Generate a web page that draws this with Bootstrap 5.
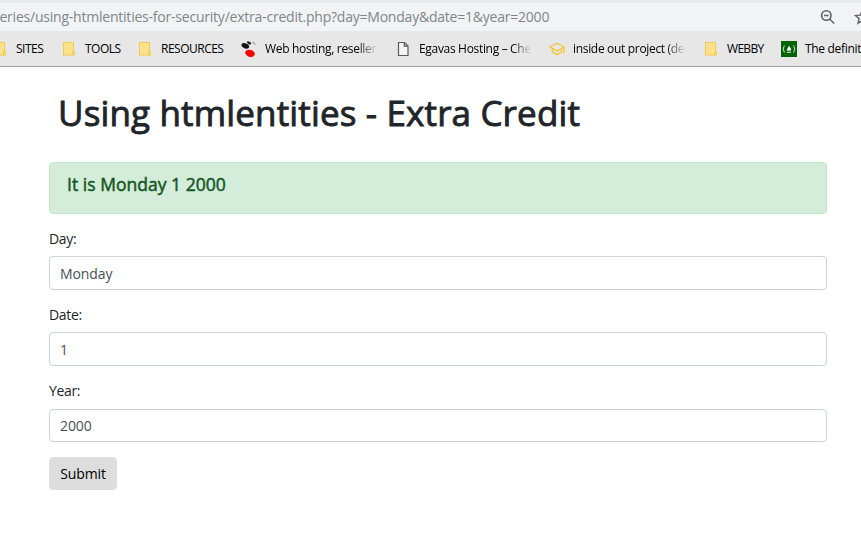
<!DOCTYPE html>
<html lang="en">
<head>
<meta charset="utf-8">
<title>Using htmlentities - Extra Credit</title>
<link href="https://cdn.jsdelivr.net/npm/bootstrap@5.3.0/dist/css/bootstrap.min.css" rel="stylesheet">
<style>
body { font-family: "Open Sans", "Noto Sans", sans-serif; font-size: 14px; line-height: 21px; color: #212529; height: 558px; }
.browser-top { height: 3px; background: #e8eaed; }
.address { height: 28px; background: #f1f3f4; color: #80868b; font-size: 14px; }
.address-url { letter-spacing: -.22px; white-space: nowrap; margin: -1px 0 0 -7px; }
.address-tools { width: 41px; gap: 18px; }
.bookmarks { height: 36px; background: #e7e7e7; border-bottom: 1px solid #a0a0a0; }
.bookmark { gap: 8px; font-size: 12px; color: #000; white-space: nowrap; }
.bookmark svg { width: 16px; height: 16px; flex: none; }
.bookmark:first-child { margin-left: -8px; }
.w-sites { width: 69px; } .w-tools { width: 76px; } .w-resources { width: 104px; }
.w-page { width: 154px; } .w-webby { width: 78px; } .w-last { width: 110px; }
.fade-title { width: 113px; -webkit-mask-image: linear-gradient(90deg, #000 82%, transparent); mask-image: linear-gradient(90deg, #000 82%, transparent); }
.t-caps { letter-spacing: -.5px; }
.t-webby { letter-spacing: -.7px; }
.t-title { letter-spacing: -.32px; }
.page { margin: 0 34px 0 49px; padding-top: 24px; }
.page-title { font-size: 35px; line-height: 44px; font-weight: 400; -webkit-text-stroke: .9px currentColor; letter-spacing: .15px; margin: 0 0 27px 9px; white-space: nowrap; }
.notice { height: 52px; padding: 10px 17px; margin-bottom: 14px; background: #d4edda; border-color: #c3e6cb; color: #155724; border-radius: 4px; }
.notice-text { font-size: 17.5px; line-height: 22px; font-weight: 400; -webkit-text-stroke: .5px currentColor; letter-spacing: .03px; }
.form-label { margin-bottom: 7px; display: block; letter-spacing: -.35px; }
.field { height: 76px; }
.field .form-control { height: 34px; padding: 5px 10px; font-size: 14px; line-height: 22px; letter-spacing: -.1px; color: #495057; border-color: #ced4da; border-radius: 4px; }
.field:nth-of-type(3) { height: 77px; }
.field:nth-of-type(3) .form-label { margin-bottom: 8px; }
.field:nth-of-type(3) .form-control { height: 33px; line-height: 21px; }
.btn-submit { --bs-btn-bg: #ddd; --bs-btn-color: #000; --bs-btn-border-color: #ddd; width: 68px; height: 33px; font-size: 14px; line-height: 21px; letter-spacing: -.1px; padding: 5px 0; border-radius: 4px; }
</style>
</head>
<body class="bg-white overflow-hidden">
<svg class="d-none">
  <symbol id="folder" viewBox="0 0 16 16"><path d="M2.500 1.500h10v9.500h1v3h-11z" fill="#ffe28a" stroke="#f2c94f"/><path d="M11.500 14v-3h2v3z" fill="#ffe28a" stroke="#f2c94f"/></symbol>
</svg>
<header>
  <div class="browser-top"></div>
  <div class="address d-flex align-items-center justify-content-between">
    <span class="address-url">series/using-htmlentities-for-security/extra-credit.php?day=Monday&amp;date=1&amp;year=2000</span>
    <div class="address-tools d-flex align-items-center flex-shrink-0">
      <svg class="flex-shrink-0" width="16" height="16" viewBox="0 0 16 16" fill="none" stroke="#5f6368" stroke-width="1.600"><circle cx="6.300" cy="6.500" r="4.700"/><path d="M9.700 10l4.500 4.500M4 6.500h4.600"/></svg>
      <svg class="flex-shrink-0" width="16" height="16" viewBox="0 0 16 16" fill="none" stroke="#5f6368" stroke-width="1.400"><path d="M8 1.800l1.800 4.300 4.700.4-3.600 3.100 1.100 4.600L8 11.800l-4 2.400 1.100-4.600L1.500 6.500l4.700-.4z"/></svg>
    </div>
  </div>
  <nav class="bookmarks d-flex align-items-center overflow-hidden">
    <div class="bookmark d-flex align-items-center flex-shrink-0 w-sites"><svg><use href="#folder"/></svg><span class="t-caps">SITES</span></div>
    <div class="bookmark d-flex align-items-center flex-shrink-0 w-tools"><svg><use href="#folder"/></svg><span class="t-caps">TOOLS</span></div>
    <div class="bookmark d-flex align-items-center flex-shrink-0 w-resources"><svg><use href="#folder"/></svg><span class="t-caps">RESOURCES</span></div>
    <div class="bookmark d-flex align-items-center flex-shrink-0 w-page">
      <svg viewBox="0 0 16 16"><ellipse cx="4.300" cy="4.900" rx="4" ry="2.500" transform="rotate(20 4.300 4.900)" fill="#111"/><ellipse cx="8" cy="1.900" rx="2.300" ry="1.300" transform="rotate(30 8 1.900)" fill="#222"/><path d="M11.500 1.800h2M13.500 3.300h1" stroke="#777"/><ellipse cx="9" cy="12.300" rx="4.900" ry="3.500" transform="rotate(18 9 12.300)" fill="#f00"/></svg>
      <span class="fade-title t-title">Web hosting, reseller</span></div>
    <div class="bookmark d-flex align-items-center flex-shrink-0 w-page">
      <svg viewBox="0 0 16 16" fill="#f4f4f4" stroke="#5a5a5a" stroke-width="1.200"><path d="M3.500 1.500h6l3.500 3.500v9.500h-9.500zM9.300 1.500v3.700H13"/></svg>
      <span class="fade-title t-title">Egavas Hosting – Che</span></div>
    <div class="bookmark d-flex align-items-center flex-shrink-0 w-page">
      <svg viewBox="0 0 16 16" fill="none" stroke="#f8c63d" stroke-width="1.400"><path d="M.8 6L8 2.200 15.200 6 8 9.900zM3.400 7.800v3.400L8 13.600l4.600-2.400V7.800M15 6v6.500"/></svg>
      <span class="fade-title t-title">inside out project (de</span></div>
    <div class="bookmark d-flex align-items-center flex-shrink-0 w-webby"><svg><use href="#folder"/></svg><span class="t-webby">WEBBY</span></div>
    <div class="bookmark d-flex align-items-center flex-shrink-0 w-last">
      <svg viewBox="0 0 16 16"><path d="M0 0h16v16H0z" fill="#006400"/><path d="M3.400 4.500Q1 8 3.400 11.500M12.600 4.500Q15 8 12.600 11.500M5.800 11.300h4.400" fill="none" stroke="#e5f1e5" stroke-width=".9"/><path d="M7.700 4.300c.2 1.600 2.500 2.500 2.300 4.300-.1 1.100-.8 1.700-1.400 1.900.3-.8-.1-1.300-.6-1.800-.1.700-.8 1-.5 1.800C5.500 9.900 5.800 8 6.700 7c.8-.9 1.200-1.700 1-2.700z" fill="#fff"/></svg>
      <span class="t-title">The definit</span></div>
  </nav>
</header>
<main class="page">
  <h1 class="page-title">Using htmlentities - Extra Credit</h1>
  <div class="alert alert-success notice"><h5 class="notice-text mb-0">It is Monday 1 2000</h5></div>
  <form>
    <div class="field"><label class="form-label" for="day">Day:</label><input class="form-control" id="day" value="Monday"></div>
    <div class="field"><label class="form-label" for="date">Date:</label><input class="form-control" id="date" value="1"></div>
    <div class="field"><label class="form-label" for="year">Year:</label><input class="form-control" id="year" value="2000"></div>
    <button type="button" class="btn btn-submit">Submit</button>
  </form>
</main>
<script src="https://cdn.jsdelivr.net/npm/bootstrap@5.3.0/dist/js/bootstrap.bundle.min.js"></script>
</body>
</html>
